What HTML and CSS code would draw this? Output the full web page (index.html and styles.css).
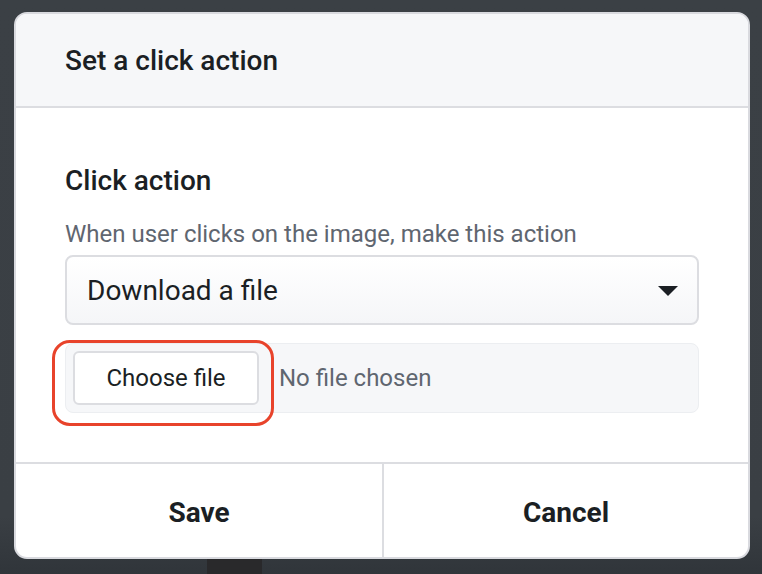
FILE: index.html
```html
<!DOCTYPE html>
<html lang="en">
<head>
<meta charset="utf-8">
<title>Set a click action</title>
<link rel="stylesheet" href="styles.css">
</head>
<body>
<div class="dialog">
  <div class="header">Set a click action</div>
  <div class="content">
    <h3 class="label">Click action</h3>
    <p class="desc">When user clicks on the image, make this action</p>
    <div class="select">
      <span class="select-value">Download a file</span>
      <svg class="caret" width="20" height="10" viewBox="0 0 20 10"><polygon points="0,0 20,0 10,10" fill="#1b1f24"/></svg>
    </div>
    <div class="file">
      <span class="file-btn">Choose file</span>
      <span class="file-status">No file chosen</span>
      <span class="highlight"></span>
    </div>
  </div>
  <div class="footer">
    <div class="action">Save</div>
    <div class="action action-right">Cancel</div>
  </div>
</div>
</body>
</html>
```

FILE: styles.css
```css
html, body {
  margin: 0;
}
body {
  height: 574px;
  box-sizing: border-box;
  padding: 12px 12px 0 14px;
  overflow: hidden;
  font-family: Roboto, "Liberation Sans", Arial, sans-serif;
  background:
    linear-gradient(to right, transparent 207px, #29292b 207px, #29292b 262px, transparent 262px) left bottom / 100% 16px no-repeat,
    linear-gradient(to bottom, #3b4045 0%, #3a3f44 90%, #30353a 100%);
}
.dialog {
  width: 736px;
  height: 547px;
  box-sizing: border-box;
  border: 2px solid #d9dadf;
  border-radius: 13px;
  background: #fff;
  overflow: hidden;
  display: flex;
  flex-direction: column;
}
.header {
  height: 92px;
  flex: none;
  background: #f6f7f9;
  border-bottom: 2px solid #dcdde1;
  display: flex;
  align-items: center;
  padding: 1px 49px 0;
  box-sizing: content-box;
  height: 91px;
  font-size: 28px;
  font-weight: 500;
  color: #1b1f24;
}
.content {
  flex: 1;
  padding: 56px 49px 0;
}
.label {
  margin: 0;
  font-size: 28px;
  line-height: 33px;
  font-weight: 500;
  color: #1b1f24;
}
.desc {
  margin: 24px 0 0;
  font-size: 24px;
  line-height: 26px;
  color: #5f6670;
}
.select {
  margin-top: 8px;
  height: 70px;
  box-sizing: border-box;
  border: 2px solid #dcdde1;
  border-radius: 8px;
  background: linear-gradient(to bottom, #ffffff, #f5f6f8);
  display: flex;
  align-items: center;
  justify-content: space-between;
  padding: 0 19px 0 20px;
}
.select-value {
  font-size: 28px;
  color: #1b1f24;
}
.caret {
  display: block;
  margin-top: 2px;
}
.file {
  position: relative;
  margin-top: 18px;
  height: 70px;
  box-sizing: border-box;
  border: 1px solid #eceef1;
  border-radius: 8px;
  background: #f6f7f9;
  display: flex;
  align-items: center;
  padding: 0 7px;
}
.file-btn {
  width: 186px;
  height: 54px;
  box-sizing: border-box;
  border: 2px solid #dcdde1;
  border-radius: 6px;
  background: #fff;
  display: flex;
  align-items: center;
  justify-content: center;
  font-size: 24px;
  color: #1b1f24;
}
.file-status {
  margin-left: 20px;
  font-size: 24px;
  color: #5f6670;
}
.highlight {
  position: absolute;
  left: -14px;
  top: -4px;
  width: 222px;
  height: 86px;
  box-sizing: border-box;
  border: 3.5px solid #e8432b;
  border-radius: 18px;
}
.footer {
  height: 93px;
  flex: none;
  border-top: 2px solid #dcdde1;
  display: grid;
  grid-template-columns: 366px 1fr;
}
.action {
  display: flex;
  align-items: center;
  justify-content: center;
  padding-top: 4px;
  font-size: 28px;
  font-weight: 700;
  color: #1b1f24;
}
.action-right {
  border-left: 2px solid #dcdde1;
}
```
